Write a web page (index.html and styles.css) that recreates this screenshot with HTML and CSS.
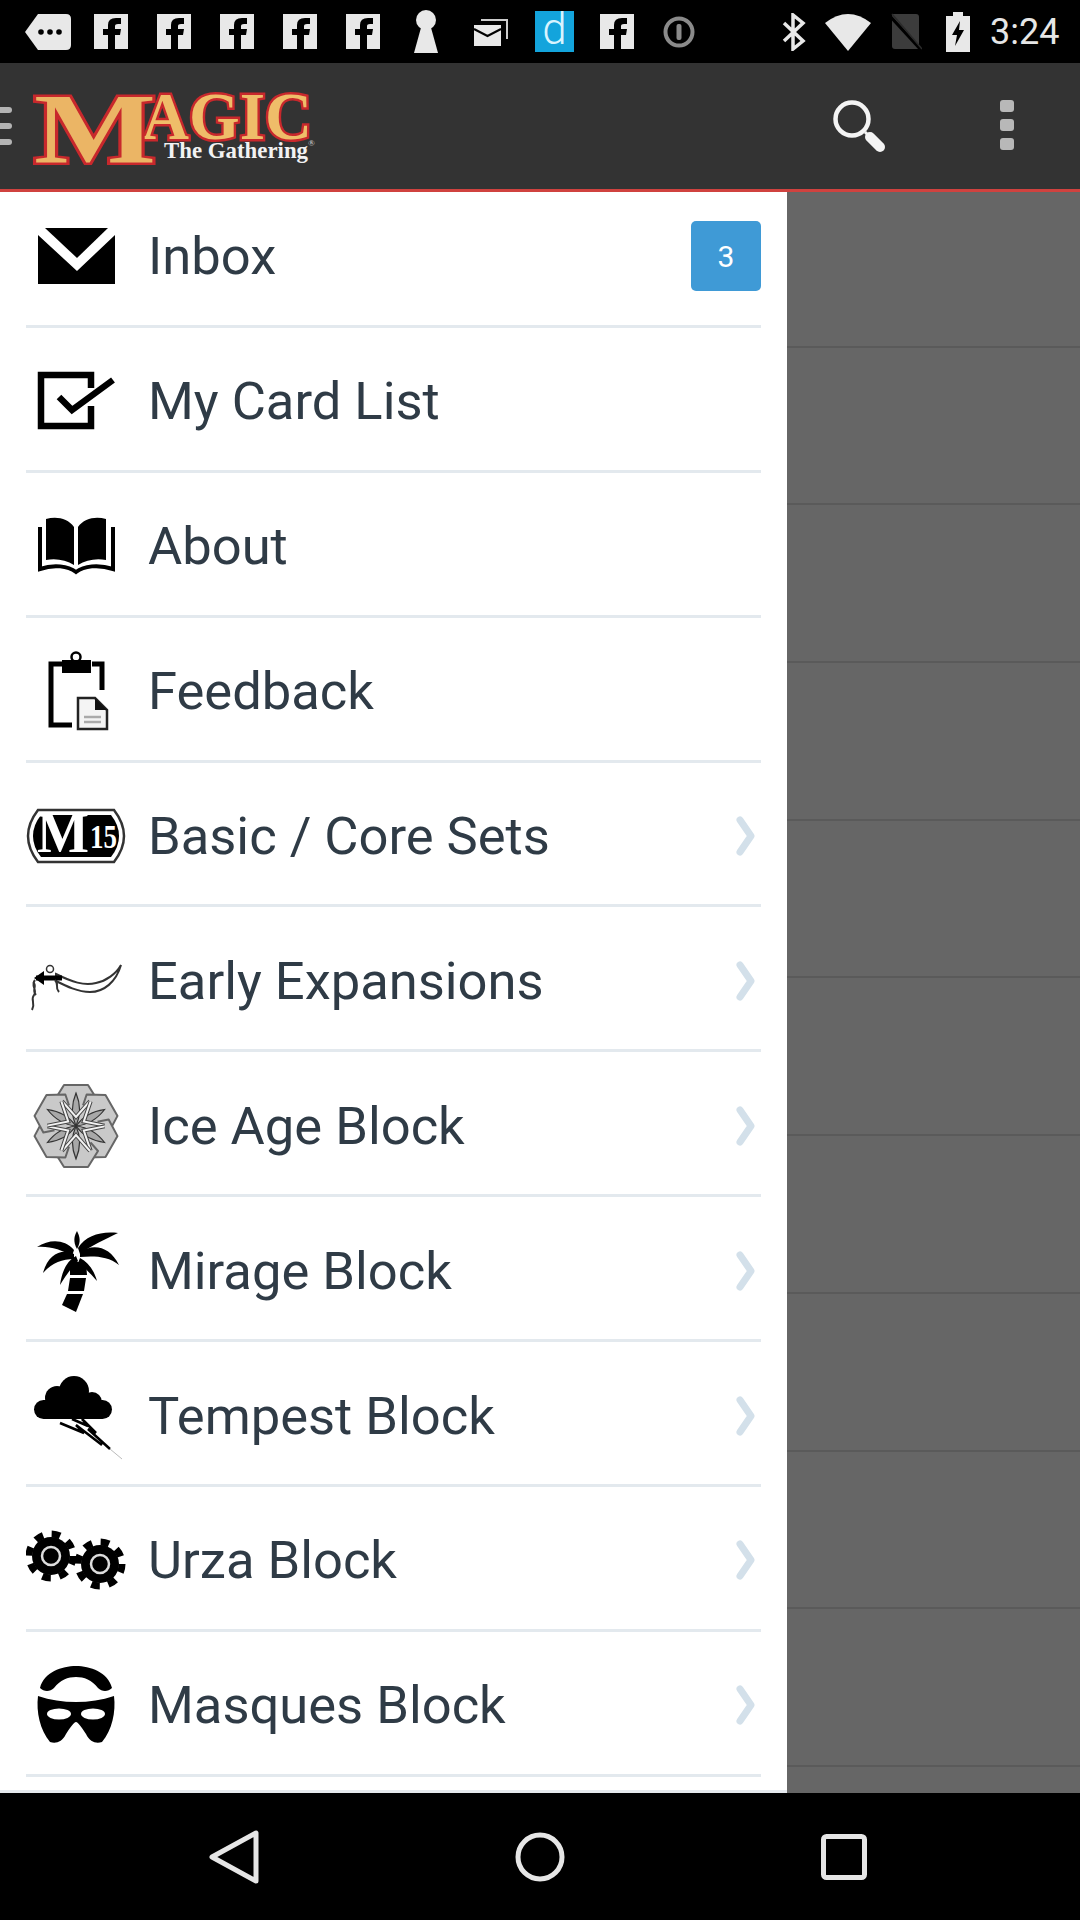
FILE: index.html
```html
<!DOCTYPE html>
<html lang="en">
<head>
<meta charset="utf-8">
<title>Magic: The Gathering</title>
<link rel="stylesheet" href="styles.css">
</head>
<body>
<svg class="defs" width="0" height="0" aria-hidden="true">
  <defs>
    <g id="fblogo"><rect width="34" height="35" fill="#e8e8e8"/><path d="M14 35V21H9V15H14V11Q14 4 22 4H27V10H24Q21 10 21 12V15H27L26 21H21V35Z" fill="#000"/></g>
    <path id="chevron" d="M5 4L16 20L5 36" fill="none" stroke="#d3e0ea" stroke-width="7" stroke-linecap="round" stroke-linejoin="round"/>
    <g id="lobe"><path d="M38 4H62L72 20L50 45L28 20Z" fill="#c9c9c9" stroke="#666" stroke-width="2" stroke-linejoin="round"/></g>
    <g id="petal"><path d="M50 45C45 34 45 24 50 12C55 24 55 34 50 45Z" fill="#a8a8a8" stroke="#333" stroke-width="1.200"/><path d="M36 20L50 36L64 20" fill="none" stroke="#444" stroke-width="4"/><path d="M36 20L50 36L64 20" fill="none" stroke="#f2f2f2" stroke-width="2"/></g>
  </defs>
</svg>
<div class="screen">
  <div class="status">
    <svg class="si tag" viewBox="0 0 46 36"><path d="M13 0H41Q46 0 46 5V31Q46 36 41 36H13L0 18Z" fill="#e8e8e8"/><circle cx="16" cy="18" r="2.800"/><circle cx="25" cy="18" r="2.800"/><circle cx="34" cy="18" r="2.800"/></svg>
    <svg class="si fb" viewBox="0 0 34 35"><use href="#fblogo"/></svg>
    <svg class="si fb" viewBox="0 0 34 35"><use href="#fblogo"/></svg>
    <svg class="si fb" viewBox="0 0 34 35"><use href="#fblogo"/></svg>
    <svg class="si fb" viewBox="0 0 34 35"><use href="#fblogo"/></svg>
    <svg class="si fb" viewBox="0 0 34 35"><use href="#fblogo"/></svg>
    <svg class="si key" viewBox="0 0 24 43"><circle cx="12" cy="10" r="10" fill="#e8e8e8"/><path d="M8 14H16L24 43H0Z" fill="#e8e8e8"/></svg>
    <svg class="si mail" viewBox="0 0 34 28"><path d="M7 2H33V21" fill="none" stroke="#ccc" stroke-width="2"/><path d="M0 7H27V28H0Z" fill="#e8e8e8"/><path d="M0 11L13.500 18L27 11" fill="none" stroke="#000" stroke-width="2"/></svg>
    <span class="dapp">d</span>
    <svg class="si fb fb-last" viewBox="0 0 34 35"><use href="#fblogo"/></svg>
    <svg class="si info" viewBox="0 0 32 32"><circle cx="16" cy="16" r="13.500" fill="none" stroke="#8a8a8a" stroke-width="4"/><rect x="13.500" y="8" width="5" height="16" rx="2" fill="#8a8a8a"/></svg>
    <svg class="si bt" viewBox="0 0 24 38"><path d="M2 10L21 28L11 36V2L21 10L2 28" fill="none" stroke="#e8e8e8" stroke-width="3.500"/></svg>
    <svg class="si wifi" viewBox="0 0 46 38"><path d="M0 10Q23 -8 46 10L23 38Z" fill="#e8e8e8"/></svg>
    <svg class="si sim" viewBox="0 0 34 38"><path d="M4 1H28Q31 1 31 4V36H7Q4 36 4 33Z" fill="#3c3c3c"/><path d="M1 2L33 37" stroke="#000" stroke-width="3"/><path d="M4 1L34 36" stroke="#2b2b2b" stroke-width="1.500"/></svg>
    <svg class="si batt" viewBox="0 0 24 40"><path d="M7 0H17V4H24V40H0V4H7Z" fill="#e8e8e8"/><path d="M14 9L6 23H11L9 34L18 18H13Z" fill="#000"/></svg>
    <span class="time">3:24</span>
  </div>

  <header class="appbar">
    <div class="burger"><i></i><i></i><i></i></div>
    <svg class="logo" viewBox="0 0 284 80">
      <text class="lg-a" x="110" y="53" textLength="170" lengthAdjust="spacingAndGlyphs">AGIC</text>
      <text class="lg-m" x="2" y="76" textLength="122" lengthAdjust="spacingAndGlyphs">M</text>
      <text class="lg-t" x="132" y="72" textLength="144" lengthAdjust="spacingAndGlyphs">The Gathering</text>
      <text class="lg-r" x="276" y="60">®</text>
    </svg>
    <svg class="search" viewBox="0 0 54 54"><circle cx="20" cy="20" r="16.500" fill="none" stroke="#f4f4f4" stroke-width="4.500"/><path d="M33 33L37 37" stroke="#f4f4f4" stroke-width="3"/><path d="M38 38L48 48" stroke="#f4f4f4" stroke-width="10" stroke-linecap="round"/></svg>
    <div class="kebab"><i></i><i></i><i></i></div>
  </header>

  <main class="body">
    <nav class="drawer">
      <div class="list">
        <div class="row">
          <svg class="ic" viewBox="0 0 100 90"><path d="M19 17H82L51 47Z"/><path d="M12 24L51 60L89 24V73H12Z"/></svg>
          <span class="label">Inbox</span><span class="badge">3</span>
        </div>
        <div class="row">
          <svg class="ic" viewBox="0 0 100 90"><path d="M65 32V19H15V70H65V50" fill="none" stroke="#000" stroke-width="6.500"/><path d="M33 41L46 54L87 24" fill="none" stroke="#000" stroke-width="6.500"/></svg>
          <span class="label">My Card List</span>
        </div>
        <div class="row">
          <svg class="ic" viewBox="0 0 100 90"><path d="M20 18C30 15 42 17 48 26V64C40 59 30 57 20 59Z"/><path d="M80 18C70 15 58 17 52 26V64C60 59 70 57 80 59Z"/><path d="M14 26V68C28 63 42 65 50 71C58 65 72 63 87 68V26" fill="none" stroke="#000" stroke-width="4"/></svg>
          <span class="label">About</span>
        </div>
        <div class="row">
          <svg class="ic" viewBox="0 0 100 90"><path d="M36 18H25V79H46M66 18H76V44" fill="none" stroke="#000" stroke-width="5"/><circle cx="50" cy="11" r="4.500" fill="none" stroke="#000" stroke-width="2.500"/><path d="M36 14H65V27H36Z"/><path d="M52 52H69L81 64V83H52Z" fill="#f4f4f4" stroke="#222" stroke-width="2.500"/><path d="M69 52V64H81Z" fill="#111"/><path d="M58 71H75M58 76H75" stroke="#aaa" stroke-width="2.500"/></svg>
          <span class="label">Feedback</span>
        </div>
        <div class="row">
          <svg class="ic" viewBox="0 0 100 90"><path d="M12 19H88Q98 32 98 45Q98 58 88 71H12Q2 58 2 45Q2 32 12 19Z" fill="#fff" stroke="#333" stroke-width="2.500"/><path d="M15 24H85Q93 34 93 45Q93 56 85 66H15Q7 56 7 45Q7 34 15 24Z"/><text class="m15-m" x="11" y="61" textLength="52" lengthAdjust="spacingAndGlyphs">M</text><text class="m15-n" x="64" y="57" textLength="27" lengthAdjust="spacingAndGlyphs">15</text></svg>
          <span class="label">Basic / Core Sets</span><svg class="chev" viewBox="0 0 20 40"><use href="#chevron"/></svg>
        </div>
        <div class="row">
          <svg class="ic" viewBox="0 0 100 90"><path d="M30 38C46 46 58 50 70 47C80 45 90 38 95 29C90 46 78 56 64 56C52 56 40 50 30 45Z" fill="#fff" stroke="#333" stroke-width="2"/><path d="M36 42H10" stroke="#000" stroke-width="5"/><path d="M8 42L18 35V49Z"/><circle cx="24" cy="33" r="3.500" fill="#fff" stroke="#333" stroke-width="1.500"/><path d="M9 44C4 50 12 54 8 59C4 64 10 66 6 74M7 46C12 50 5 54 10 59" fill="none" stroke="#333" stroke-width="2"/><path d="M29 44C34 50 28 50 33 56" fill="none" stroke="#333" stroke-width="2"/></svg>
          <span class="label">Early Expansions</span><svg class="chev" viewBox="0 0 20 40"><use href="#chevron"/></svg>
        </div>
        <div class="row">
          <svg class="ic" viewBox="0 0 100 90"><use href="#lobe"/><use href="#lobe" transform="rotate(60 50 45)"/><use href="#lobe" transform="rotate(120 50 45)"/><use href="#lobe" transform="rotate(180 50 45)"/><use href="#lobe" transform="rotate(240 50 45)"/><use href="#lobe" transform="rotate(300 50 45)"/><circle cx="50" cy="45" r="22" fill="#c9c9c9"/><use href="#petal"/><use href="#petal" transform="rotate(60 50 45)"/><use href="#petal" transform="rotate(120 50 45)"/><use href="#petal" transform="rotate(180 50 45)"/><use href="#petal" transform="rotate(240 50 45)"/><use href="#petal" transform="rotate(300 50 45)"/></svg>
          <span class="label">Ice Age Block</span><svg class="chev" viewBox="0 0 20 40"><use href="#chevron"/></svg>
        </div>
        <div class="row">
          <svg class="ic" viewBox="0 0 100 90"><path d="M48 24C38 13 24 13 11 21C24 20 36 24 46 30Z"/><path d="M48 28C36 22 22 28 17 47C26 37 36 33 48 33Z"/><path d="M50 30C42 34 36 44 34 59C40 49 46 41 52 35Z"/><path d="M52 22C60 9 76 5 92 7C80 13 64 20 54 28Z"/><path d="M54 26C68 17 84 21 93 39C82 30 68 30 54 31Z"/><path d="M54 32C62 36 68 44 71 55C64 47 58 41 52 37Z"/><path d="M51 23C47 16 48 10 51 5C54 11 55 16 51 23Z"/><path d="M44 36H60L61 49H44Z"/><path d="M44 52H60L58 65H42Z"/><path d="M41 68H57L50 86L36 79Z"/></svg>
          <span class="label">Mirage Block</span><svg class="chev" viewBox="0 0 20 40"><use href="#chevron"/></svg>
        </div>
        <div class="row">
          <svg class="ic" viewBox="0 0 100 90"><circle cx="48" cy="20" r="15"/><circle cx="31" cy="27" r="12"/><circle cx="66" cy="31" r="10"/><rect x="8" y="29" width="78" height="19" rx="9.500"/><path d="M34 52L58 62L50 54L76 74M46 48L62 55L56 48L70 62L62 58L84 78" fill="none" stroke="#000" stroke-width="2.500"/><path d="M84 78L96 88" stroke="#bbb" stroke-width="1"/></svg>
          <span class="label">Tempest Block</span><svg class="chev" viewBox="0 0 20 40"><use href="#chevron"/></svg>
        </div>
        <div class="row">
          <svg class="ic" viewBox="0 0 100 90"><circle cx="25" cy="41" r="19"/><circle cx="25" cy="41" r="22" fill="none" stroke="#000" stroke-width="7" stroke-dasharray="8.600 8.680"/><circle cx="74" cy="49" r="19"/><circle cx="74" cy="49" r="22" fill="none" stroke="#000" stroke-width="7" stroke-dasharray="8.600 8.680"/><circle cx="25" cy="41" r="9" fill="none" stroke="#ddd" stroke-width="2.500"/><circle cx="74" cy="49" r="9" fill="none" stroke="#ddd" stroke-width="2.500"/></svg>
          <span class="label">Urza Block</span><svg class="chev" viewBox="0 0 20 40"><use href="#chevron"/></svg>
        </div>
        <div class="row">
          <svg class="ic" viewBox="0 0 100 90"><path d="M14 28C18 12 36 6 50 6C64 6 82 12 86 28C82 32 76 32 72 28C66 20 58 17 50 17C42 17 34 20 28 28C24 32 18 32 14 28Z"/><path d="M12 36C36 44 64 44 88 36C90 52 86 70 76 82C70 84 64 82 60 74C56 68 52 62 50 62C48 62 44 68 40 74C36 82 30 84 24 82C14 70 10 52 12 36Z"/><ellipse cx="33" cy="54" rx="12" ry="5.500" fill="#fff"/><ellipse cx="67" cy="54" rx="12" ry="5.500" fill="#fff"/></svg>
          <span class="label">Masques Block</span><svg class="chev" viewBox="0 0 20 40"><use href="#chevron"/></svg>
        </div>
      </div>
    </nav>
    <div class="scrim">
      <i></i><i></i><i></i><i></i><i></i><i></i><i></i><i></i><i></i><i></i>
    </div>
  </main>

  <footer class="navbar">
    <svg class="nv" viewBox="0 0 60 60"><path d="M50 6V54L6 30Z" fill="none" stroke="#e6e6e6" stroke-width="5" stroke-linejoin="round"/></svg>
    <svg class="nv" viewBox="0 0 60 60"><circle cx="30" cy="30" r="22" fill="none" stroke="#e6e6e6" stroke-width="5"/></svg>
    <svg class="nv" viewBox="0 0 60 60"><rect x="9.500" y="9.500" width="41" height="41" rx="3" fill="none" stroke="#e6e6e6" stroke-width="5"/></svg>
  </footer>
</div>
</body>
</html>
```

FILE: styles.css
```css
* { box-sizing: border-box; }
html, body { margin: 0; padding: 0; }
body { background: #000; font-family: Roboto, "Liberation Sans", sans-serif; }
.defs { display: block; height: 0; }
.screen { width: 1080px; height: 1920px; display: flex; flex-direction: column; overflow: hidden; }

.status { height: 63px; flex: none; background: #000; display: flex; align-items: center; padding-left: 25px; color: #e8e8e8; }
.si { display: block; flex: none; }
.tag { width: 46px; height: 36px; }
.fb { width: 34px; height: 35px; margin-left: 29px; }
.tag + .fb { margin-left: 23px; }
.key { width: 24px; height: 43px; margin-left: 34px; }
.mail { width: 34px; height: 28px; margin-left: 36px; }
.dapp { width: 39px; height: 41px; margin-left: 27px; background: #13a4dc; color: #d8f4ff; font: 300 44px/37px Roboto, sans-serif; text-align: center; overflow: hidden; }
.si.fb-last { margin-left: 26px; }
.info { width: 32px; height: 32px; margin-left: 29px; }
.bt { width: 24px; height: 38px; margin-left: 87px; }
.wifi { width: 46px; height: 38px; margin-left: 19px; }
.sim { width: 34px; height: 38px; margin-left: 17px; }
.batt { width: 24px; height: 40px; margin-left: 24px; }
.time { margin-left: 20px; font-size: 36px; line-height: 40px; color: #e6e6e6; }

.appbar { height: 129px; flex: none; position: relative; z-index: 2; background: #333; border-bottom: 3px solid #d0423f; display: flex; align-items: center; }
.burger { width: 12px; display: flex; flex-direction: column; gap: 10px; }
.burger i { display: block; height: 6px; background: #b4b4b4; border-radius: 0 3px 3px 0; }
.logo { width: 284px; height: 80px; margin-left: 20px; overflow: visible; }
.logo text { font-family: "Liberation Serif", serif; font-weight: 700; }
.lg-m { font-size: 100px; fill: #ebb565; stroke: #c8282c; stroke-width: 5px; paint-order: stroke; }
.lg-a { font-size: 68px; fill: #efbd69; stroke: #c8282c; stroke-width: 5px; paint-order: stroke; }
.lg-t { font-size: 23px; fill: #f2f2f2; }
.lg-r { font-size: 9px; fill: #bbb; }
.search { width: 54px; height: 54px; margin-left: auto; }
.kebab { width: 14px; margin-left: 114px; margin-right: 66px; margin-bottom: 2px; display: flex; flex-direction: column; gap: 7px; }
.kebab i { display: block; height: 12px; background: #b8b8b8; border-radius: 3px; }

.body { flex: 1; display: flex; min-height: 0; }
.drawer { width: 787px; flex: none; background: #fff; border-bottom: 3px solid #e6eaee; overflow: hidden; }
.list { margin-top: -9px; padding: 0 26px; }
.row { height: 144.9px; padding-top: 5px; display: flex; align-items: center; border-bottom: 3px solid #e3e9ee; }
.ic { width: 100px; height: 90px; flex: none; margin-right: 22px; }
.label { flex: 1; font-size: 52.5px; color: #2f3b46; white-space: nowrap; }
.badge { width: 70px; height: 70px; background: #3f9ad6; border-radius: 5px; color: #fff; font-size: 30px; display: flex; align-items: center; justify-content: center; }
.chev { width: 20px; height: 40px; flex: none; margin-right: 6px; }
.m15-m { font: 700 56px "Liberation Serif", serif; fill: #fff; }
.m15-n { font: 700 34px "Liberation Serif", serif; fill: #fff; }

.scrim { flex: 1; background: #666; display: flex; flex-direction: column; overflow: hidden; }
.scrim i { display: block; height: 157.7px; flex: none; border-bottom: 2px solid #5a5a5a; }
.scrim i:first-child { height: 155.7px; }

.navbar { height: 127px; flex: none; background: #000; display: flex; align-items: center; justify-content: center; gap: 244px; }
.nv { width: 60px; height: 60px; }
```
